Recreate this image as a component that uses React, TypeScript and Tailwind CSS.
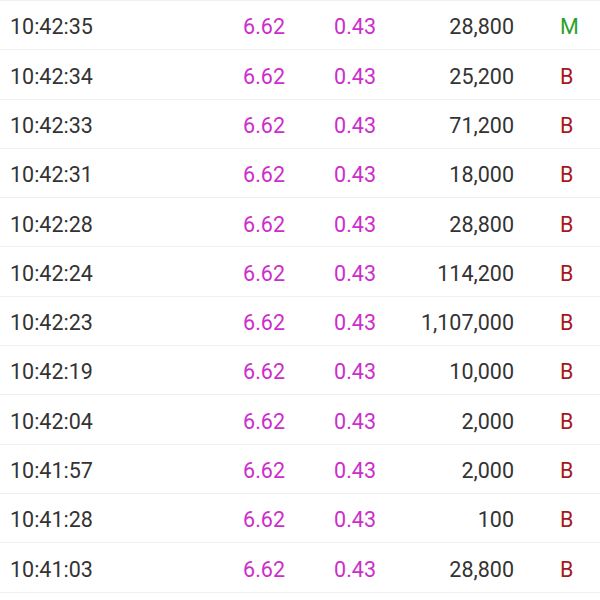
import React from "react";

const rows: [string, string, string][] = [
  ["10:42:35", "28,800", "M"],
  ["10:42:34", "25,200", "B"],
  ["10:42:33", "71,200", "B"],
  ["10:42:31", "18,000", "B"],
  ["10:42:28", "28,800", "B"],
  ["10:42:24", "114,200", "B"],
  ["10:42:23", "1,107,000", "B"],
  ["10:42:19", "10,000", "B"],
  ["10:42:04", "2,000", "B"],
  ["10:41:57", "2,000", "B"],
  ["10:41:28", "100", "B"],
  ["10:41:03", "28,800", "B"],
];

export default function App() {
  return (
    <div
      className="w-[600px] h-[600px] bg-white overflow-hidden border-t border-[#f2f2f2]"
      style={{ fontFamily: "Roboto, 'Liberation Sans', sans-serif" }}
    >
      {rows.map(([t, v, k], i) => (
        <div
          key={i}
          className="flex items-center h-[49.3px] pt-[4px] border-b border-[#efefef] text-[21.5px] leading-none"
        >
          <div className="w-[200px] pl-[10px] text-[#333333]">{t}</div>
          <div className="w-[85px] text-right text-[#cc2ecc]">6.62</div>
          <div className="w-[91px] text-right text-[#cc2ecc]">0.43</div>
          <div className="w-[138px] text-right text-[#333333]">{v}</div>
          <div
            className={
              "ml-[46px] " + (k === "M" ? "text-[#2ca02c]" : "text-[#a8171d]")
            }
          >
            {k}
          </div>
        </div>
      ))}
    </div>
  );
}
